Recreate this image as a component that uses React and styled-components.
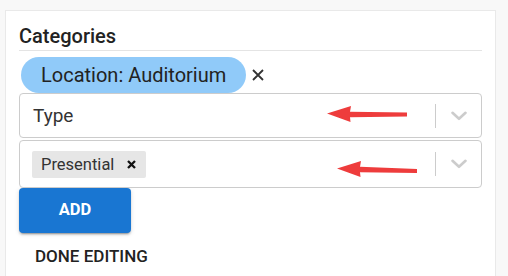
import React from 'react';
import styled, {createGlobalStyle} from 'styled-components';

const GlobalStyle = createGlobalStyle`
  body {
    margin: 0;
    background: #f8f8f8;
    font-family: Roboto, "Liberation Sans", sans-serif;
  }
  * {
    box-sizing: border-box;
  }
`;

const Page = styled.div`
  padding: 10px 0 0 5px;
`;

const Card = styled.section`
  width: 491px;
  min-height: 300px;
  background: #fff;
  border: 1px solid #e9e9e9;
  padding: 13px 13px 20px;
  display: flex;
  flex-direction: column;
  align-items: flex-start;
`;

const Title = styled.h2`
  align-self: stretch;
  margin: 0;
  font-size: 20px;
  font-weight: 500;
  line-height: 24px;
  color: #222;
  padding-bottom: 2px;
  border-bottom: 1px solid #e4e4e4;
`;

const ChipRow = styled.div`
  display: flex;
  align-items: center;
  gap: 6px;
  margin: 6px 0 0 2px;
`;

const Chip = styled.span`
  display: inline-flex;
  align-items: center;
  height: 36px;
  padding: 0 20px;
  border-radius: 18px;
  background: #90caf9;
  color: #222;
  font-size: 20px;
`;

const IconButton = styled.button`
  display: flex;
  padding: 0;
  border: 0;
  background: none;
  color: ${p => p.color || '#333'};
`;

const Select = styled.div`
  position: relative;
  align-self: stretch;
  display: flex;
  align-items: center;
  height: ${p => p.height}px;
  margin-top: ${p => p.gap || 0}px;
  border: 1px solid #ccc;
  border-radius: 4px;
  background: #fff;
`;

const ValueArea = styled.div`
  flex: 1;
  display: flex;
  align-items: center;
  padding-left: ${p => p.pad}px;
`;

const Placeholder = styled.span`
  font-size: 19px;
  color: #333;
`;

const Tag = styled.span`
  display: inline-flex;
  align-items: center;
  height: 27px;
  border-radius: 2px;
  background: #e6e6e6;
`;

const TagLabel = styled.span`
  padding: 0 4px 0 9px;
  font-size: 16.5px;
  color: #333;
`;

const TagRemove = styled.span`
  display: flex;
  align-items: center;
  padding: 0 10px 0 9px;
  align-self: stretch;
`;

const Separator = styled.span`
  width: 1px;
  height: 24px;
  background: #ccc;
`;

const Indicator = styled.span`
  width: 45px;
  display: flex;
  justify-content: center;
  align-items: center;
`;

const Arrow = styled.svg`
  position: absolute;
  left: ${p => p.x}px;
  top: ${p => p.y}px;
`;

const AddButton = styled.button`
  width: 112px;
  height: 45px;
  padding: 0 0 3px;
  border: 0;
  border-radius: 4px;
  background: #1976d2;
  color: #fff;
  font-family: inherit;
  font-size: 16.5px;
  font-weight: 700;
  box-shadow: 0 3px 1px -2px rgba(0, 0, 0, .2), 0 2px 2px 0 rgba(0, 0, 0, .14), 0 1px 5px 0 rgba(0, 0, 0, .12);
`;

const TextButton = styled.button`
  height: 45px;
  padding: 0 16px;
  border: 0;
  background: none;
  color: #222;
  font-family: inherit;
  font-size: 17px;
  font-weight: 500;
`;

const Chevron = () => (
  <svg width="16" height="10" viewBox="0 0 16 10">
    <polyline points="1.5,1.8 8,7.8 14.5,1.8" fill="none" stroke="#ccc" strokeWidth="2.6" strokeLinecap="round" strokeLinejoin="round"/>
  </svg>
);

const RedArrow = ({x, y, drop}) => (
  <Arrow x={x} y={y} width="84" height="20" viewBox="0 0 84 20">
    <polygon
      points={`1,8.5 25,1 24,6.7 81,${7.5 + drop} 81,${11.5 + drop} 24,12.3 24.5,17`}
      fill="#ee3c3c"
    />
  </Arrow>
);

const App = () => (
  <Page>
    <GlobalStyle/>
    <Card>
      <Title>Categories</Title>

      <ChipRow>
        <Chip>Location: Auditorium</Chip>
        <IconButton>
          <svg width="12" height="12" viewBox="0 0 12 12">
            <path d="M1 1 L11 11 M11 1 L1 11" stroke="currentColor" strokeWidth="1.8"/>
          </svg>
        </IconButton>
      </ChipRow>

      <Select height={45}>
        <ValueArea pad={13}>
          <Placeholder>Type</Placeholder>
        </ValueArea>
        <Separator/>
        <Indicator><Chevron/></Indicator>
        <RedArrow x={306} y={11} drop={0}/>
      </Select>

      <Select height={48} gap={2}>
        <ValueArea pad={12}>
          <Tag>
            <TagLabel>Presential</TagLabel>
            <TagRemove>
              <svg width="9" height="9" viewBox="0 0 9 9">
                <path d="M1 1 L8 8 M8 1 L1 8" stroke="#111" strokeWidth="2.3"/>
              </svg>
            </TagRemove>
          </Tag>
        </ValueArea>
        <Separator/>
        <Indicator><Chevron/></Indicator>
        <RedArrow x={316} y={19} drop={1.5}/>
      </Select>

      <AddButton>ADD</AddButton>
      <TextButton>DONE EDITING</TextButton>
    </Card>
  </Page>
);

export default App;
